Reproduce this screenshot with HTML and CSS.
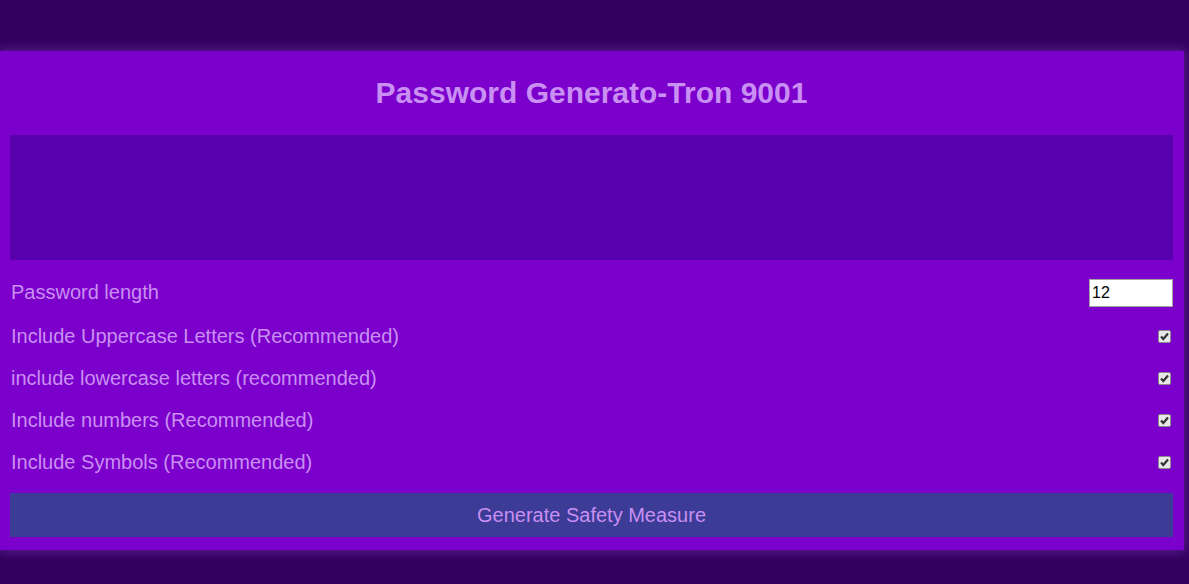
FILE: index.html
```html
<!DOCTYPE html>
<html lang="en">
<head>
<meta charset="utf-8">
<title>Password Generato-Tron 9001</title>
<link rel="stylesheet" href="styles.css">
</head>
<body>
<main class="card">
  <h1 class="title">Password Generato-Tron 9001</h1>
  <div class="output"></div>
  <div class="row row-first">
    <label for="len">Password length</label>
    <input id="len" class="num" type="number" value="12">
  </div>
  <div class="row">
    <label for="up">Include Uppercase Letters (Recommended)</label>
    <input id="up" class="check" type="checkbox" checked>
  </div>
  <div class="row">
    <label for="low">include lowercase letters (recommended)</label>
    <input id="low" class="check" type="checkbox" checked>
  </div>
  <div class="row">
    <label for="num">Include numbers (Recommended)</label>
    <input id="num" class="check" type="checkbox" checked>
  </div>
  <div class="row">
    <label for="sym">Include Symbols (Recommended)</label>
    <input id="sym" class="check" type="checkbox" checked>
  </div>
  <button class="gen" type="button">Generate Safety Measure</button>
</main>
</body>
</html>
```
FILE: styles.css
```css
html, body {
  margin: 0;
  padding: 0;
}
body {
  background: #32005f;
  font-family: "Liberation Sans", Arial, sans-serif;
  color: #c98ff2;
  height: 584px;
  overflow: hidden;
  padding-top: 51px;
  box-sizing: border-box;
}
.card {
  width: 1184px;
  box-sizing: border-box;
  background: #7b00cb;
  padding: 26px 11px 13px 10px;
  display: flex;
  flex-direction: column;
  box-shadow: 0 0 10px 2px #5a1a8f;
}
.title {
  margin: 0;
  text-align: center;
  font-size: 30px;
  line-height: 32px;
  font-weight: bold;
  color: #c98ff2;
}
.output {
  margin-top: 26px;
  height: 125px;
  background: #5800ae;
}
.row {
  display: flex;
  align-items: center;
  justify-content: space-between;
  height: 42px;
  font-size: 20px;
}
.row-first {
  margin-top: 10px;
  height: 45px;
}
.row label {
  padding-left: 1px;
}
.num {
  width: 84px;
  height: 28px;
  box-sizing: border-box;
  border: 1px solid #a3a3a3;
  background: #fff;
  font-family: "Liberation Sans", Arial, sans-serif;
  font-size: 16px;
  padding: 1px 2px;
  margin: 0;
  color: #000;
  -moz-appearance: textfield;
}
.num::-webkit-inner-spin-button,
.num::-webkit-outer-spin-button {
  -webkit-appearance: none;
  margin: 0;
}
.check {
  appearance: none;
  -webkit-appearance: none;
  width: 13px;
  height: 13px;
  margin: 0 2px 0 0;
  border: 1px solid #8c8c8c;
  border-radius: 2px;
  background: #e8e8e8 url("data:image/svg+xml,%3Csvg xmlns='http://www.w3.org/2000/svg' viewBox='0 0 11 11'%3E%3Cpath d='M2 5.5 L4.3 8 L9 2.5' fill='none' stroke='%23333' stroke-width='2.2'/%3E%3C/svg%3E") center/11px 11px no-repeat;
  box-sizing: border-box;
}
.gen {
  margin-top: 10px;
  height: 44px;
  border: 0;
  background: #3c3b96;
  color: #c98ff2;
  font-family: "Liberation Sans", Arial, sans-serif;
  font-size: 20px;
  cursor: pointer;
}
```
